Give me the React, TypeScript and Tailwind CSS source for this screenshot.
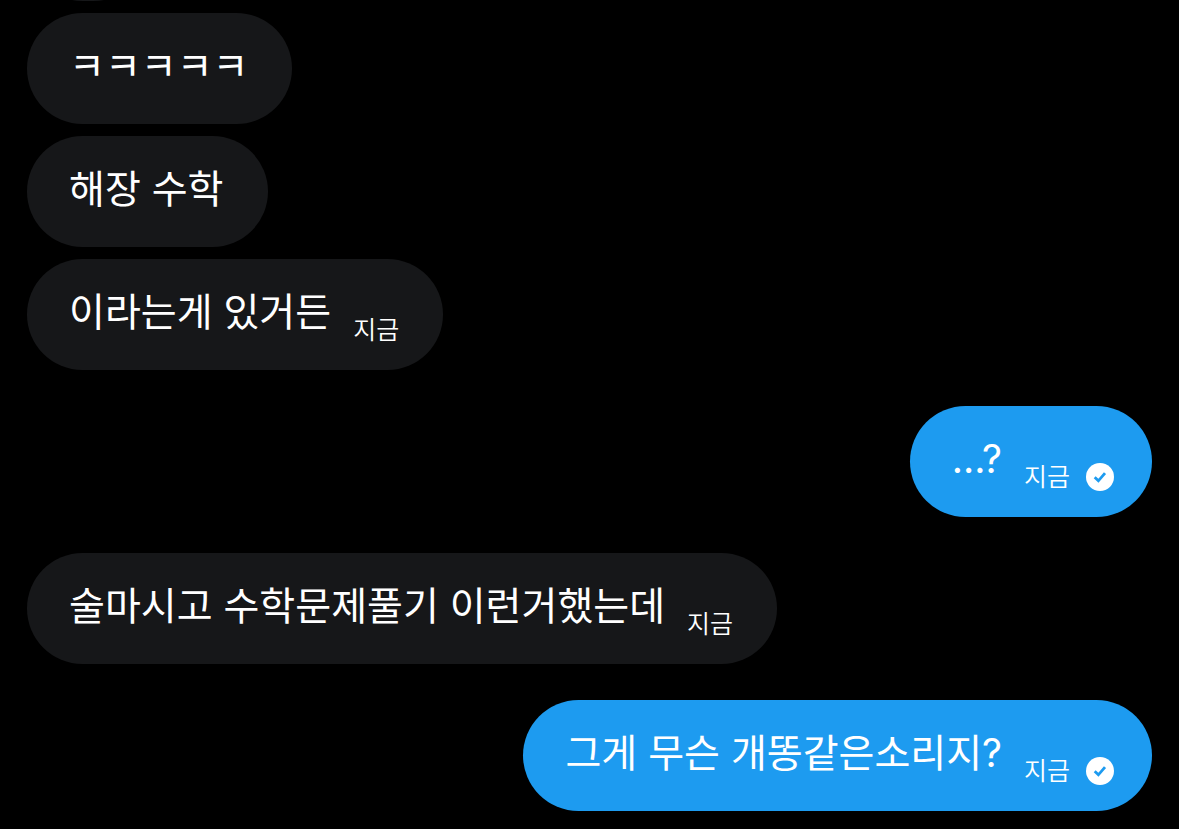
type Message = {
  text: string;
  sent?: boolean;
  time?: string;
};

const groups: Message[][] = [
  [
    { text: 'ㅋㅋㅋㅋㅋ' },
    { text: '해장 수학' },
    { text: '이라는게 있거든', time: '지금' },
  ],
  [{ text: '...?', sent: true, time: '지금' }],
  [{ text: '술마시고 수학문제풀기 이런거했는데', time: '지금' }],
  [{ text: '그게 무슨 개똥같은소리지?', sent: true, time: '지금' }],
];

function SentIcon() {
  return (
    <svg viewBox="0 0 28 28" className="ml-4 size-7 shrink-0" role="img" aria-label="Sent">
      <circle cx="14" cy="14" r="14" fill="#fff" />
      <path d="M8.7 14.2l3.7 3.6 6.6-7.6" fill="none" stroke="#1d9bf0" strokeWidth="2.8" />
    </svg>
  );
}

function Bubble({ text, sent, time }: Message) {
  return (
    <li
      className={`flex h-[111px] max-w-full items-center rounded-[56px] text-white ${
        sent ? 'self-end bg-[#1d9bf0] pl-[42px] pr-[38px]' : 'self-start bg-[#161719] pl-[42px] pr-11'
      }`}
    >
      <p className="pb-1.5 text-[39px] leading-[56px]">{text}</p>
      {time && (
        <span className="flex items-center pl-[22px] pt-[30px]">
          <time className="text-[25px] font-[350] leading-8">{time}</time>
          {sent && <SentIcon />}
        </span>
      )}
    </li>
  );
}

export default function App() {
  return (
    <main className="min-h-screen overflow-hidden bg-black px-[27px] pb-[18px] font-['Inter','Noto_Sans_CJK_KR',sans-serif]">
      {/* tail of the message scrolled off the top */}
      <div className="mb-3 flex h-px items-end overflow-hidden" aria-hidden="true">
        <div className="h-[111px] w-[122px] shrink-0 rounded-[56px] bg-[#161719]" />
      </div>
      <div className="flex flex-col gap-9">
        {groups.map((messages, i) => (
          <ul key={i} className="flex flex-col gap-3">
            {messages.map((message) => (
              <Bubble key={message.text} {...message} />
            ))}
          </ul>
        ))}
      </div>
    </main>
  );
}
